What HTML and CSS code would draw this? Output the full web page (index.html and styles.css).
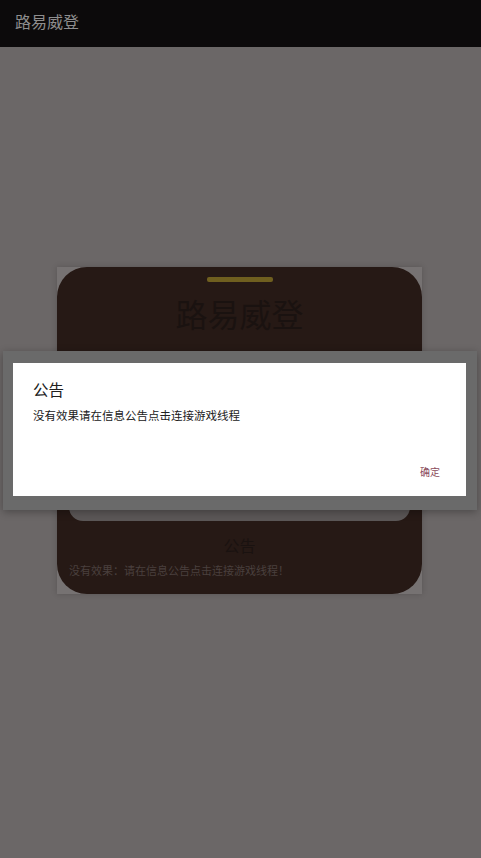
FILE: index.html
```html
<!DOCTYPE html>
<html lang="zh-CN">
<head>
<meta charset="utf-8">
<title>路易威登</title>
<link rel="stylesheet" href="styles.css">
</head>
<body>
<div class="app">
  <header class="topbar"><span class="topbar-title">路易威登</span></header>
  <main class="content">
    <div class="card-wrap">
      <section class="card">
        <div class="handle"></div>
        <h1 class="card-title">路易威登</h1>
        <div class="input-box"></div>
        <h2 class="notice-title">公告</h2>
        <p class="notice-text">没有效果：请在信息公告点击连接游戏线程！</p>
      </section>
    </div>
  </main>
  <div class="dialog-frame">
    <div class="dialog">
      <div class="dialog-title">公告</div>
      <div class="dialog-body">没有效果请在信息公告点击连接游戏线程</div>
      <div class="dialog-actions"><span class="dialog-btn">确定</span></div>
    </div>
  </div>
</div>
</body>
</html>
```
FILE: styles.css
```css
* { box-sizing: border-box; }
html, body { margin: 0; padding: 0; }
body {
  font-family: "Noto Sans CJK SC", "Noto Sans", sans-serif;
  background: #6b6767;
}
.app {
  position: relative;
  width: 481px;
  height: 858px;
  background: #6b6767;
  overflow: hidden;
}
.topbar {
  height: 47px;
  background: #0c0a0b;
  display: flex;
  align-items: center;
  padding: 0 0 6px 15px;
}
.topbar-title {
  color: #8e8d8e;
  font-size: 16px;
  line-height: 20px;
}
.content {
  padding: 220px 0 0 57px;
}
.card-wrap {
  width: 365px;
  background: #767272;
  box-shadow: 0 0 6px rgba(0,0,0,0.18);
}
.card {
  background: #261915;
  border-radius: 30px;
  padding: 10px 12px 15px;
  display: flex;
  flex-direction: column;
}
.handle {
  width: 66px;
  height: 5px;
  border-radius: 2px;
  background: #6f5f1f;
  margin: 0 auto;
}
.card-title {
  margin: 11px 0 0;
  text-align: center;
  font-size: 32px;
  line-height: 40px;
  font-weight: 400;
  color: #1a1210;
}
.input-box {
  margin-top: 37px;
  height: 151px;
  background: #5b5757;
  border-radius: 14px;
}
.notice-title {
  margin: 12px 0 0;
  text-align: center;
  font-size: 16px;
  line-height: 24px;
  font-weight: 400;
  color: #1a1210;
}
.notice-text {
  margin: 4px 0 0;
  font-size: 11px;
  line-height: 18px;
  color: #4a403e;
  white-space: nowrap;
}
.dialog-frame {
  position: absolute;
  left: 3px;
  top: 351px;
  width: 474px;
  height: 159px;
  background: #6a6a6a;
  box-shadow: 0 2px 8px rgba(0,0,0,0.3);
  padding: 12px 11px 14px 10px;
}
.dialog {
  background: #ffffff;
  height: 100%;
  padding: 15px 26px 0 20px;
  display: flex;
  flex-direction: column;
}
.dialog-title {
  font-size: 15.5px;
  line-height: 22px;
  color: #202020;
}
.dialog-body {
  margin-top: 6px;
  font-size: 11.5px;
  line-height: 18px;
  color: #202020;
}
.dialog-actions {
  margin-top: 41px;
  display: flex;
  justify-content: flex-end;
}
.dialog-btn {
  font-size: 10px;
  line-height: 14px;
  color: #8a4a5a;
}
```
